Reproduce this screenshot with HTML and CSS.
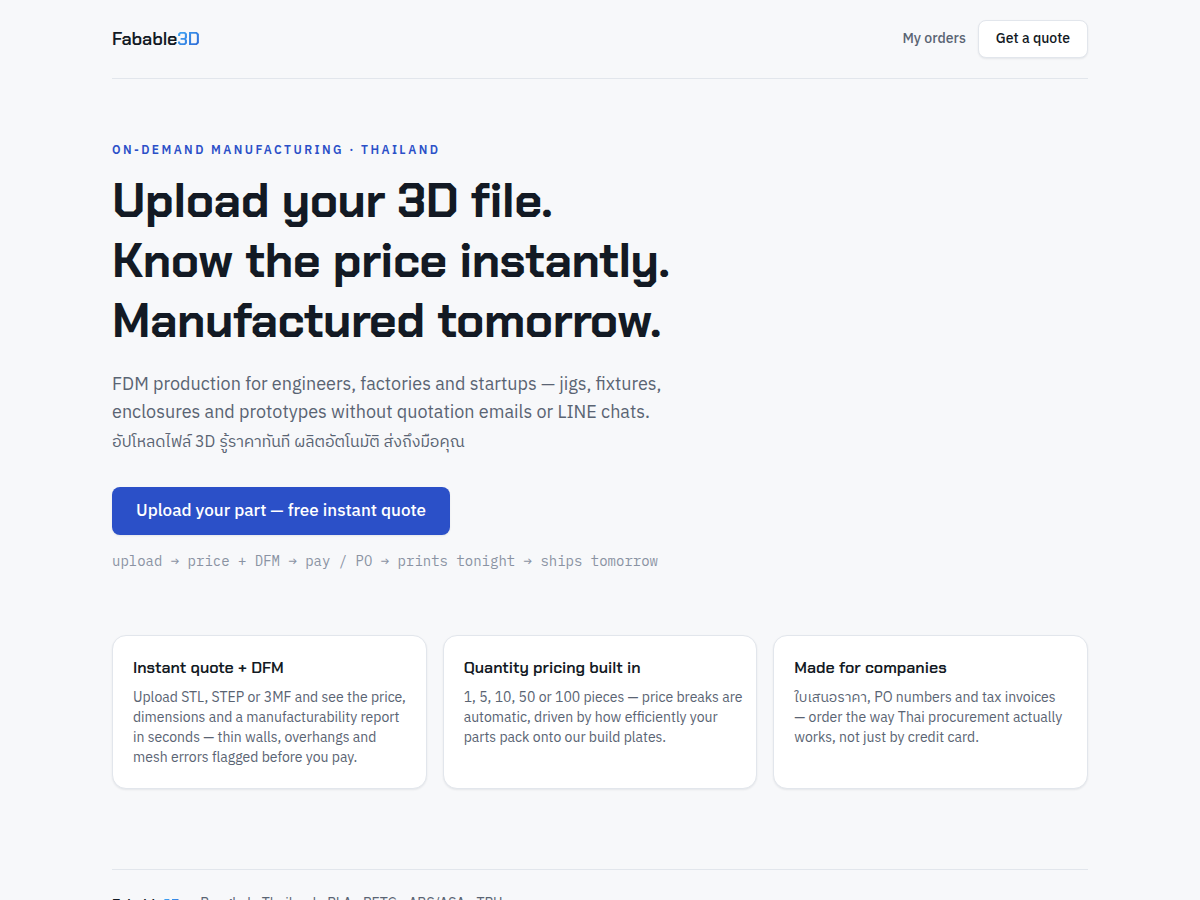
FILE: index.html
```html
<!DOCTYPE html>
<html lang="en">
<head>
<meta charset="utf-8">
<meta name="viewport" content="width=device-width, initial-scale=1">
<title>Fabable3D</title>
<link rel="stylesheet" href="styles.css">
</head>
<body>
<div class="page">
  <header class="header">
    <a class="brand" href="#">Fabable<span class="brand-accent">3D</span></a>
    <nav class="nav">
      <a class="nav-link" href="#orders">My orders</a>
      <a class="button button-light" href="#quote">Get a quote</a>
    </nav>
  </header>
  <main>
    <section class="hero">
      <p class="eyebrow">On-demand manufacturing · Thailand</p>
      <h1 class="title">Upload your 3D file.<br>Know the price instantly.<br>Manufactured tomorrow.</h1>
      <p class="lead">FDM production for engineers, factories and startups — jigs, fixtures, enclosures and prototypes without quotation emails or LINE chats.</p>
      <p class="lead-thai" lang="th">อัปโหลดไฟล์ 3D รู้ราคาทันที ผลิตอัตโนมัติ ส่งถึงมือคุณ</p>
      <a class="button button-primary" href="#upload">Upload your part — free instant quote</a>
      <p class="steps">upload → price + DFM → pay / PO → prints tonight → ships tomorrow</p>
    </section>
    <section class="cards">
      <article class="card">
        <h2 class="card-title">Instant quote + DFM</h2>
        <p class="card-text">Upload STL, STEP or 3MF and see the price,<br>dimensions and a manufacturability report<br>in seconds — thin walls, overhangs and<br>mesh errors flagged before you pay.</p>
      </article>
      <article class="card">
        <h2 class="card-title">Quantity pricing built in</h2>
        <p class="card-text">1, 5, 10, 50 or 100 pieces — price breaks are<br>automatic, driven by how efficiently your<br>parts pack onto our build plates.</p>
      </article>
      <article class="card">
        <h2 class="card-title">Made for companies</h2>
        <p class="card-text"><span lang="th">ใบเสนอราคา</span>, PO numbers and tax invoices<br>— order the way Thai procurement actually<br>works, not just by credit card.</p>
      </article>
    </section>
  </main>
  <footer class="footer">
    <span class="brand brand-small">Fabable<span class="brand-accent">3D</span></span>
    <span>Bangkok, Thailand · PLA · PETG · ABS/ASA · TPU</span>
  </footer>
</div>
</body>
</html>
```

FILE: styles.css
```css
* {
  box-sizing: border-box;
}

body {
  margin: 0;
  background: #f7f8fa;
  color: #131a24;
  font-family: "IBM Plex Sans Thai", "IBM Plex Sans", Roboto, "Noto Sans", sans-serif;
  font-size: 14px;
  line-height: 20px;
}

h1, h2, p {
  margin: 0;
}

a {
  color: inherit;
  text-decoration: none;
}

.page {
  max-width: 1024px;
  margin: 0 auto;
  padding: 0 24px;
}

.header {
  display: flex;
  align-items: center;
  justify-content: space-between;
  padding: 20px 0;
  border-bottom: 1px solid #e2e6ec;
}

.brand {
  font-family: "Chakra Petch", "Bai Jamjuree", Inter, sans-serif;
  font-size: 18px;
  font-weight: 600;
  letter-spacing: -0.01em;
  line-height: 28px;
  color: #131a24;
}

.brand-accent {
  background: linear-gradient(135deg, #42b0fa, #2b5fd0);
  background-clip: text;
  -webkit-background-clip: text;
  color: transparent;
}

.brand-small {
  font-size: 14px;
  line-height: 20px;
}

.nav {
  display: flex;
  align-items: center;
  gap: 12px;
  font-weight: 500;
}

.nav-link {
  color: #5a6473;
}

.button {
  display: inline-block;
  border-radius: 8px;
  font-weight: 500;
}

.button-light {
  padding: 8px 17px;
  border: 1px solid #e2e6ec;
  background: #ffffff;
  box-shadow: 0 1px 2px rgba(19, 26, 36, 0.08);
}

.button-primary {
  padding: 12px 24px;
  margin-top: 32px;
  background: #2b50c8;
  color: #ffffff;
  font-size: 17px;
  line-height: 24px;
  box-shadow: 0 1px 2px rgba(19, 26, 36, 0.08);
}

.hero {
  padding: 64px 0;
}

.eyebrow {
  color: #2b50c8;
  font-size: 12px;
  font-weight: 600;
  line-height: 16px;
  letter-spacing: 0.2em;
  text-transform: uppercase;
}

.title {
  margin-top: 12px;
  font-family: "Chakra Petch", "Bai Jamjuree", Inter, sans-serif;
  font-size: 48px;
  font-weight: 700;
  line-height: 60px;
  letter-spacing: -0.01em;
}

.lead {
  max-width: 576px;
  margin-top: 20px;
  color: #5a6473;
  font-size: 18px;
  line-height: 28px;
}

.lead-thai {
  margin-top: 4px;
  color: #5a6473;
  font-size: 16px;
  line-height: 24px;
}

.steps {
  margin-top: 16px;
  color: #8a93a3;
  font-family: "IBM Plex Mono", "Liberation Mono", monospace;
  font-size: 14px;
  line-height: 20px;
}

.cards {
  display: grid;
  grid-template-columns: repeat(auto-fit, minmax(300px, 1fr));
  gap: 16px;
}

.card {
  padding: 20px;
  border: 1px solid #e2e6ec;
  border-radius: 14px;
  background: #ffffff;
  box-shadow: 0 1px 2px rgba(19, 26, 36, 0.08);
}

.card-title {
  font-family: "Chakra Petch", "Bai Jamjuree", Inter, sans-serif;
  font-size: 16px;
  font-weight: 600;
  line-height: 24px;
}

.card-text {
  margin-top: 8px;
  color: #5a6473;
  white-space: nowrap;
}

.footer {
  display: flex;
  flex-wrap: wrap;
  gap: 20px;
  margin-top: 80px;
  padding: 24px 0;
  border-top: 1px solid #e2e6ec;
  color: #5a6473;
}
```
